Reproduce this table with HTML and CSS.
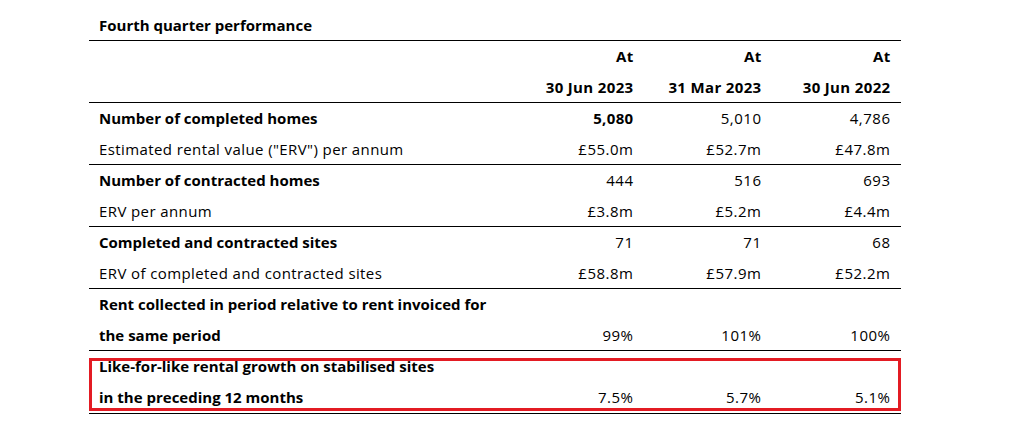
FILE: index.html
```html
<!DOCTYPE html>
<html>
<head>
<meta charset="utf-8">
<link rel="stylesheet" href="styles.css">
</head>
<body>
<div class="table">
  <div class="row title-row"><div class="label b">Fourth quarter performance</div></div>
  <div class="group">
    <div class="row"><div class="label"></div><div class="num b">At</div><div class="num b">At</div><div class="num b">At</div></div>
    <div class="row"><div class="label"></div><div class="num b">30 Jun 2023</div><div class="num b">31 Mar 2023</div><div class="num b">30 Jun 2022</div></div>
  </div>
  <div class="group">
    <div class="row"><div class="label b">Number of completed homes</div><div class="num b">5,080</div><div class="num">5,010</div><div class="num">4,786</div></div>
    <div class="row"><div class="label">Estimated rental value ("ERV") per annum</div><div class="num">£55.0m</div><div class="num">£52.7m</div><div class="num">£47.8m</div></div>
  </div>
  <div class="group">
    <div class="row"><div class="label b">Number of contracted homes</div><div class="num">444</div><div class="num">516</div><div class="num">693</div></div>
    <div class="row"><div class="label">ERV per annum</div><div class="num">£3.8m</div><div class="num">£5.2m</div><div class="num">£4.4m</div></div>
  </div>
  <div class="group">
    <div class="row"><div class="label b">Completed and contracted sites</div><div class="num">71</div><div class="num">71</div><div class="num">68</div></div>
    <div class="row"><div class="label">ERV of completed and contracted sites</div><div class="num">£58.8m</div><div class="num">£57.9m</div><div class="num">£52.2m</div></div>
  </div>
  <div class="group">
    <div class="row"><div class="label b">Rent collected in period relative to rent invoiced for</div><div class="num"></div><div class="num"></div><div class="num"></div></div>
    <div class="row"><div class="label b">the same period</div><div class="num">99%</div><div class="num">101%</div><div class="num">100%</div></div>
  </div>
  <div class="group highlighted">
    <div class="row"><div class="label b">Like-for-like rental growth on stabilised sites</div><div class="num"></div><div class="num"></div><div class="num"></div></div>
    <div class="row"><div class="label b">in the preceding 12 months</div><div class="num">7.5%</div><div class="num">5.7%</div><div class="num">5.1%</div></div>
    <div class="highlight-box"></div>
  </div>
</div>
</body>
</html>
```
FILE: styles.css
```css
* { box-sizing: border-box; }
body {
  margin: 0;
  background: #fff;
  font-family: "Open Sans", "Noto Sans", sans-serif;
  font-size: 15px;
  color: #000;
}
.table {
  width: 812px;
  margin: 10px 0 0 89px;
}
.title-row {
  border-bottom: 1px solid #000;
}
.group {
  border-bottom: 1px solid #000;
}
.highlighted {
  position: relative;
}
.row {
  display: grid;
  grid-template-columns: 426px 128px 128px 130px;
  height: 31px;
  line-height: 31px;
}
.group .row:last-of-type { height: 30px; }
.label {
  padding-left: 10px;
  white-space: nowrap;
  letter-spacing: 0.4px;
}
.num {
  text-align: right;
  padding-right: 10px;
  white-space: nowrap;
  letter-spacing: 0.5px;
  margin-right: -0.5px;
}
.row .num:last-child { padding-right: 11px; }
.b { font-weight: 700; letter-spacing: 0; }
.num.b { letter-spacing: 0.35px; }
.highlight-box {
  position: absolute;
  left: 0;
  right: 0;
  top: 7px;
  bottom: 2px;
  border: 3px solid #e31b23;
}
```
